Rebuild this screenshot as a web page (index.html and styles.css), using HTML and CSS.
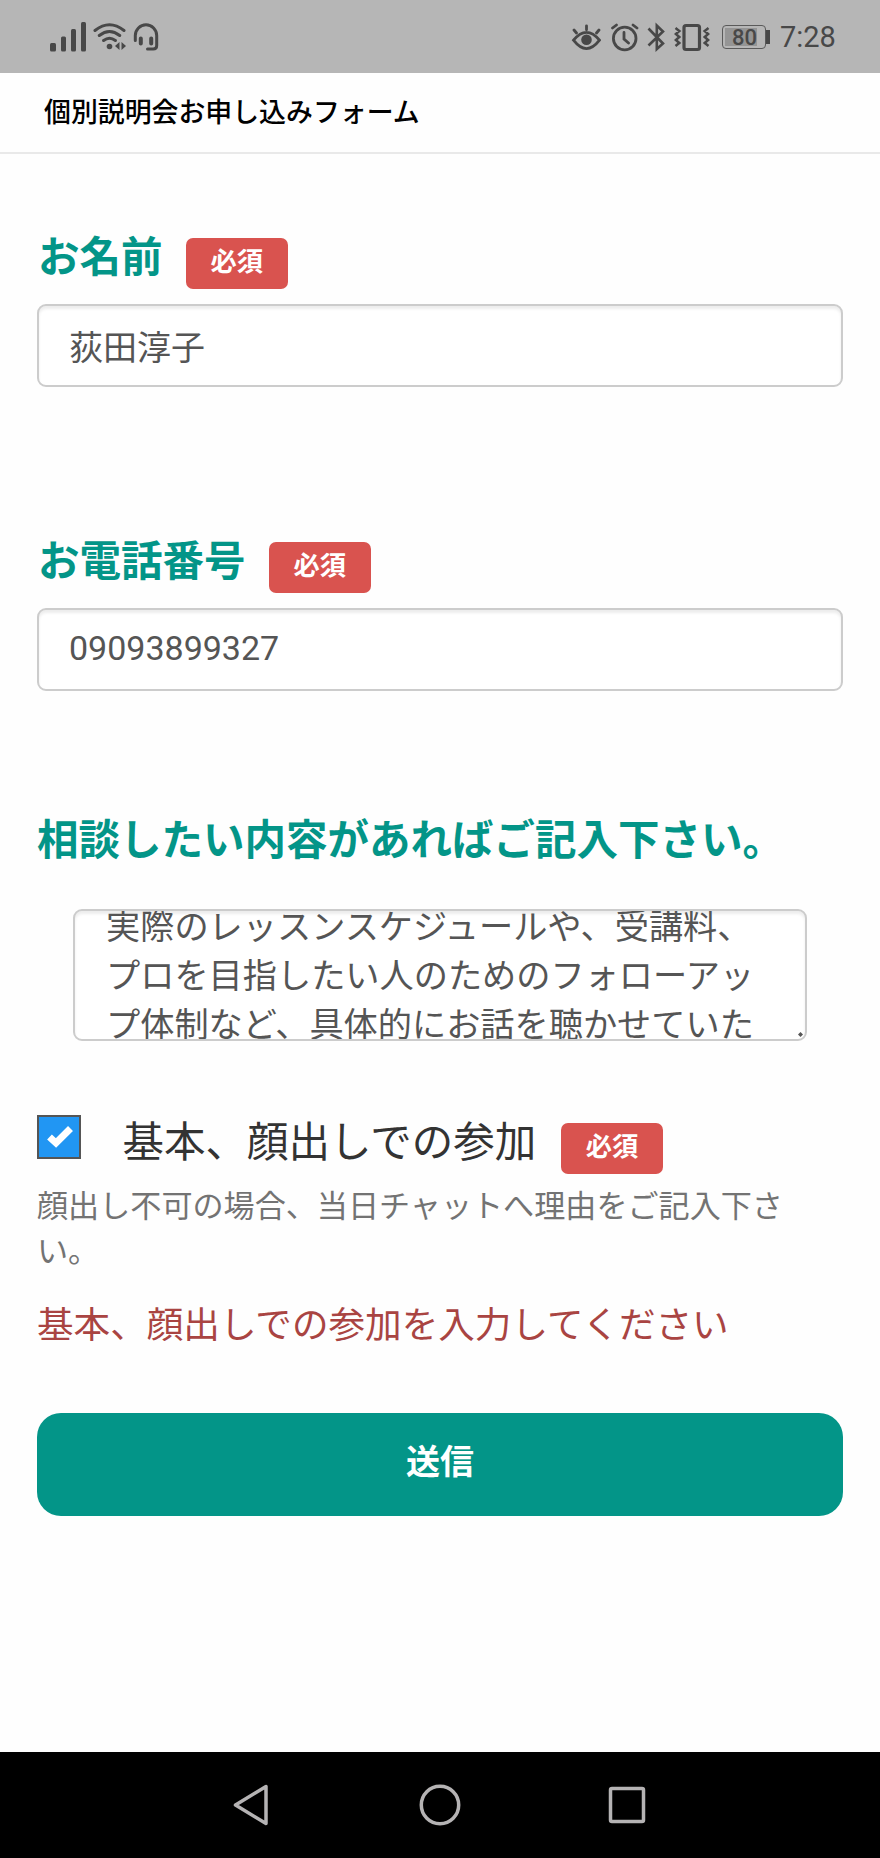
FILE: index.html
```html
<!DOCTYPE html>
<html lang="ja">
<head>
	<meta charset="utf-8">
	<title>個別説明会お申し込みフォーム</title>
	<link rel="stylesheet" href="styles.css">
</head>

<body>
	<div class="statusbar">
		<div class="status-left">
			<svg width="36" height="30" viewBox="50 22 36 30" fill="#484848">
				<rect x="50" y="43" width="6" height="8.5" rx="1.5"/>
				<rect x="61" y="36.5" width="5" height="15" rx="1.5"/>
				<rect x="71" y="29" width="5" height="22.5" rx="1.5"/>
				<rect x="81" y="22" width="5" height="29.5" rx="1.5"/>
			</svg>
			<svg class="wifi" width="34" height="30" viewBox="92 22 34 30" fill="none" stroke="#484848" stroke-width="3" stroke-linecap="round">
				<path d="M95 30.5Q109.5 19 124 30.5M99.3 35.5Q109.5 27.5 119.7 35.5M103.6 40.5Q109.5 36 115.4 40.5"/>
				<circle cx="109.5" cy="46.5" r="2.800" fill="#484848" stroke="none"/>
				<path d="M119.500 42v8l-4.500-4zM121.500 42v8l4.500-4z" fill="#484848" stroke="none"/>
			</svg>
			<svg class="headset" width="26" height="30" viewBox="133 22 26 30" fill="none" stroke="#484848" stroke-width="3" stroke-linecap="round">
				<path d="M135.3 40.5V35.5a10.700 10.700 0 0 1 21.4 0V45.500q0 3.500-3.500 3.500H147.500"/>
				<path d="M140.800 38.500v5M151.200 38.500v5" stroke-width="4"/>
			</svg>
		</div>
		<div class="status-right">
			<svg width="30" height="30" viewBox="571 22 30 30" fill="none" stroke="#484848" stroke-width="2.8" stroke-linecap="round">
				<path d="M573.5 40.2Q586.5 24.5 599.5 40.2Q586.5 57 573.5 40.2zM586.5 25.800v4M574 30l2.500 3M599 30l-2.500 3"/>
				<circle cx="586.5" cy="39.8" r="5.3" fill="#484848" stroke="none"/>
			</svg>
			<svg class="alarm" width="28" height="30" viewBox="611 22 28 30" fill="none" stroke="#484848" stroke-width="2.8" stroke-linecap="round">
				<circle cx="624.7" cy="38.5" r="11.3"/>
				<path d="M624 32.500v6.500l4.500 4M612.500 28l4-3M637 28l-4-3"/>
			</svg>
			<svg class="bluetooth" width="18" height="30" viewBox="647 22 18 30" fill="none" stroke="#484848" stroke-width="2.6">
				<path d="M648.500 28.500L663 43.500L656.800 49V25.500L663 31.500L648.500 45.500"/>
			</svg>
			<svg class="vibrate" width="36" height="30" viewBox="674 22 36 30" fill="none" stroke="#484848" stroke-width="2.5">
				<rect x="684" y="25.5" width="15.5" height="24" rx="2" stroke-width="3.2"/>
				<path d="M675.500 28l3.800 3-3.500 3 3.500 3-3.500 3 3.500 3-3.800 3M708.500 28l-3.800 3 3.500 3-3.500 3 3.500 3-3.500 3 3.800 3"/>
			</svg>
			<div class="battery"><span class="level">80</span></div>
			<div class="clock">7:28</div>
		</div>
	</div>

	<div class="header">個別説明会お申し込みフォーム</div>

	<form class="form">
		<div class="field">
			<label for="name">お名前<span class="badge">必須</span></label>
			<input id="name" type="text" value="荻田淳子">
		</div>
		<div class="field tel">
			<label for="tel">お電話番号<span class="badge">必須</span></label>
			<input id="tel" type="tel" value="09093899327">
		</div>
		<div class="field message">
			<label>相談したい内容があればご記入下さい。</label>
			<div class="textarea">
				<div class="lines">実際のレッスンスケジュールや、受講料、<br>プロを目指したい人のためのフォローアッ<br>プ体制など、具体的にお話を聴かせていた</div>
				<svg class="grip" width="5" height="5" viewBox="0 0 5 5"><path d="M2.500 0L5 2.500 2.500 5 0 2.500z" fill="#555"/></svg>
			</div>
		</div>
		<div class="check">
			<span class="box">
				<svg width="26" height="24" viewBox="0 0 26 24"><path d="M2.500 13L9 19 23.500 4.500" fill="none" stroke="#fff" stroke-width="7"/></svg>
			</span>
			<span class="check-text">基本、顔出しでの参加<span class="badge">必須</span></span>
		</div>
		<p class="help">顔出し不可の場合、当日チャットへ理由をご記入下さい。</p>
		<p class="error">基本、顔出しでの参加を入力してください</p>
		<button class="submit" type="button">送信</button>
	</form>

	<div class="navbar">
		<svg width="38" height="44" viewBox="0 0 38 44"><path d="M34 3.500V40.500L3.500 22z" fill="none" stroke="#b5b3b4" stroke-width="3.5" stroke-linejoin="round"/></svg>
		<svg width="44" height="44" viewBox="0 0 44 44"><circle cx="23" cy="22" r="18.7" fill="none" stroke="#b5b3b4" stroke-width="3.5"/></svg>
		<svg width="38" height="38" viewBox="0 0 38 38"><rect x="2.5" y="2.5" width="33" height="33" rx="1.5" fill="none" stroke="#b5b3b4" stroke-width="3.5"/></svg>
	</div>
</body>
</html>
```
FILE: styles.css
```css
*{
	box-sizing: border-box;
}
body{
	margin: 0;
	height: 1858px;
	display: flex;
	flex-direction: column;
	background-color: #fefefe;
	font-family: Roboto, "Noto Sans CJK JP", sans-serif;
	color: #333;
}
svg{
	display: block;
}
.statusbar{
	height: 73px;
	padding: 0 44px 0 50px;
	display: flex;
	justify-content: space-between;
	background-color: #b6b6b6;
	color: #484848;
}
.status-left, .status-right{
	display: flex;
	align-items: center;
}
.wifi{
	margin-left: 6px;
}
.headset{
	margin-left: 7px;
}
.alarm{
	margin-left: 10px;
}
.bluetooth{
	margin-left: 8px;
}
.vibrate{
	margin-left: 9px;
}
.battery{
	display: flex;
	align-items: center;
	margin-left: 12px;
	width: 44px;
	height: 24px;
	padding: 2px;
	border: 1.5px solid #5a5a5a;
	border-radius: 4px;
}
.battery::after{
	content: "";
	flex: none;
	width: 4px;
	height: 14px;
	margin-left: 9px;
	background-color: #484848;
}
.level{
	flex: none;
	width: 32px;
	height: 18px;
	padding-left: 7px;
	background-color: #959595;
	font-size: 22px;
	font-weight: 500;
	line-height: 19px;
}
.clock{
	width: 56px;
	margin-left: 14px;
	font-size: 29px;
	line-height: 30px;
	padding-top: 1px;
	white-space: nowrap;
}
.header{
	height: 81px;
	padding-left: 44px;
	border-bottom: 2px solid #e9e9e9;
	font-size: 26.9px;
	font-weight: 500;
	line-height: 81px;
	color: #000;
}
.form{
	flex: 1;
	padding: 76px 37px 0;
}
.field label{
	display: flex;
	height: 74px;
	padding-left: 1px;
	font-size: 41.5px;
	font-weight: 700;
	line-height: 56px;
	color: #039588;
}
.badge{
	height: 51px;
	margin: 8px 0 0 23px;
	padding: 0 25px;
	border-radius: 7px;
	background-color: #d9534f;
	color: #fff;
	font-size: 26.3px;
	font-weight: 700;
	line-height: 49px;
}
.field input{
	display: block;
	width: 100%;
	height: 83px;
	padding: 0 30px;
	border: 2.5px solid #ccc;
	border-radius: 9px;
	background-color: #fff;
	box-shadow: inset 0 3px 3px rgba(0,0,0,0.075);
	font: inherit;
	font-size: 34px;
	color: #555;
}
.tel{
	margin-top: 147px;
}
.tel input{
	padding-bottom: 4px;
}
.message{
	margin-top: 122px;
}
.message label{
	height: 96px;
	padding-left: 0;
}
.textarea{
	position: relative;
	height: 132px;
	margin: 0 36px;
	padding: 0 31px;
	overflow: hidden;
	border: 2.5px solid #ccc;
	border-radius: 9px;
	background-color: #fff;
	box-shadow: inset 0 3px 3px rgba(0,0,0,0.075);
}
.lines{
	margin-top: -8px;
	font-size: 34.2px;
	line-height: 48.8px;
	color: #555;
	white-space: nowrap;
}
.grip{
	position: absolute;
	right: 2px;
	bottom: 2px;
}
.check{
	display: flex;
	height: 74px;
	margin-top: 74px;
}
.box{
	width: 44px;
	height: 44px;
	padding: 7px 0 0 8px;
	border: 2px solid #555;
	background-color: #2196f3;
}
.check-text{
	display: flex;
	margin-left: 41.5px;
	font-size: 41.5px;
	line-height: 56px;
}
.check .badge{
	margin-left: 24.5px;
}
.help{
	margin: -4px 0 0;
	font-size: 31.1px;
	line-height: 44.5px;
	color: #737373;
}
.error{
	margin: 26px 0 0;
	font-size: 36.6px;
	line-height: 52px;
	color: #a94442;
}
.submit{
	display: block;
	width: 100%;
	height: 103px;
	margin-top: 61px;
	padding: 0 0 10px;
	border: 0;
	border-radius: 24px;
	background-color: #039588;
	color: #fff;
	font: inherit;
	font-size: 34px;
	font-weight: 700;
}
.navbar{
	height: 106px;
	display: flex;
	align-items: center;
	justify-content: space-between;
	padding: 0 234px 0 232px;
	background-color: #000;
}
```
